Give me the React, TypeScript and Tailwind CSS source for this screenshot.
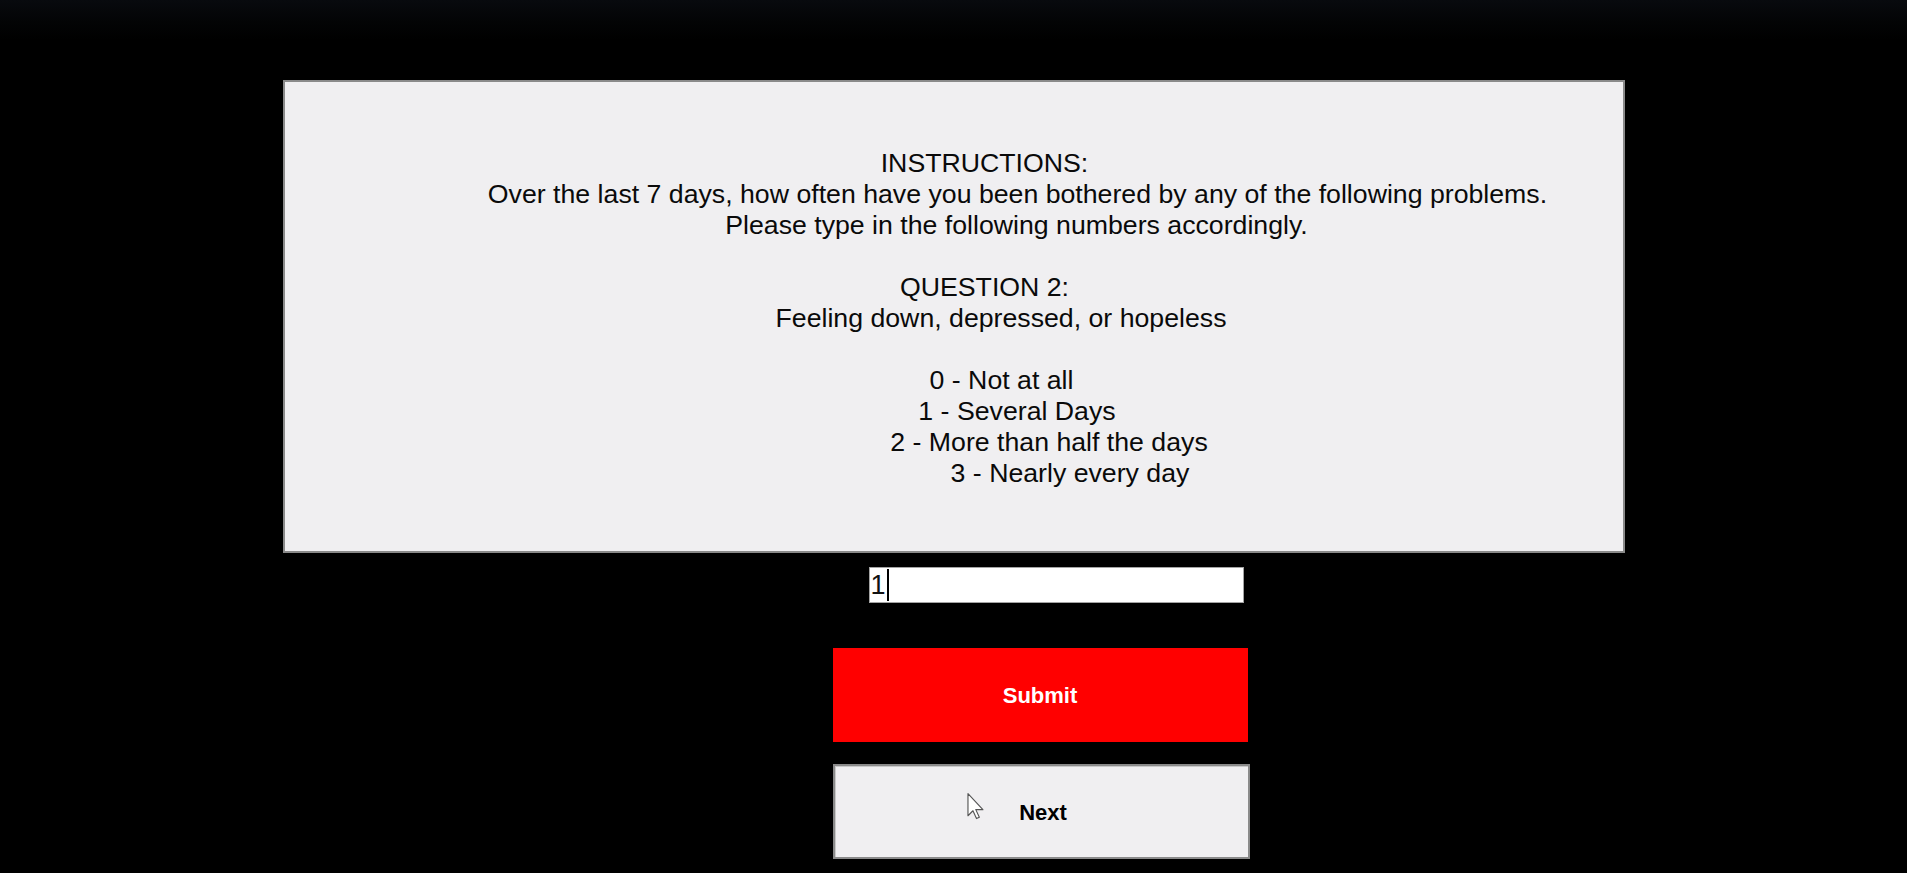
import React from "react";

const lines: { text: string; pl: string }[] = [
  { text: "INSTRUCTIONS:", pl: "pl-[62px]" },
  { text: "Over the last 7 days, how often have you been bothered by any of the following problems.", pl: "pl-[128px]" },
  { text: "Please type in the following numbers accordingly.", pl: "pl-[126px]" },
  { text: "", pl: "" },
  { text: "QUESTION 2:", pl: "pl-[62px]" },
  { text: "Feeling down, depressed, or hopeless", pl: "pl-[95px]" },
  { text: "", pl: "" },
  { text: "0 - Not at all", pl: "pl-[96px]" },
  { text: "1 - Several Days", pl: "pl-[127px]" },
  { text: "2 - More than half the days", pl: "pl-[191px]" },
  { text: "3 - Nearly every day", pl: "pl-[233px]" },
];

export default function App() {
  return (
    <div
      className="w-full h-[873px] overflow-hidden bg-[linear-gradient(180deg,#080a0e_0px,#030405_22px,#000_40px)]"
      style={{ fontFamily: '"Liberation Sans", Arial, sans-serif' }}
    >
      <div className="w-[1342px] mx-auto pt-[80px] flex flex-col">
        <div className="h-[473px] bg-[#f0eff1] border-2 border-[#8a8a8a] pt-[66px] text-[#0a0a0a]">
          {lines.map((l, i) => (
            <div
              key={i}
              className={`h-[31px] leading-[31px] text-[26.7px] text-center whitespace-pre ${l.pl}`}
            >
              {l.text}
            </div>
          ))}
        </div>

        <div className="ml-[586px] mt-[14px] w-[375px] h-[36px] bg-white border border-[#a3a3a3] flex items-center pl-[1px]">
          <span className="text-[27px] leading-[34px] text-[#111]">1</span>
          <span className="ml-[1px] w-[2px] h-[32px] bg-black" />
        </div>

        <div className="ml-[550px] mt-[45px] w-[415px] h-[94px] bg-[#ff0000] flex items-center justify-center">
          <span className="text-white font-bold text-[22px]">Submit</span>
        </div>

        <div className="relative ml-[550px] mt-[22px] w-[417px] h-[95px] bg-[#f0eff1] border-2 border-[#8a8a8a] shadow-[inset_1px_1px_0_#c9c9c9] flex items-center justify-center">
          <span className="text-black font-bold text-[22px] pl-[4px] pt-[2px]">Next</span>
          <svg
            className="absolute left-[132px] top-[27px]"
            width="19"
            height="27"
            viewBox="0 0 13 19"
          >
            <path
              d="M0.5 0.5 L0.5 16 L4 12.5 L6.5 18 L8.5 17 L6 11.7 L11 11.7 Z"
              fill="#ffffff"
              stroke="#555"
              strokeWidth="0.8"
              strokeLinejoin="round"
            />
          </svg>
        </div>
      </div>
    </div>
  );
}
